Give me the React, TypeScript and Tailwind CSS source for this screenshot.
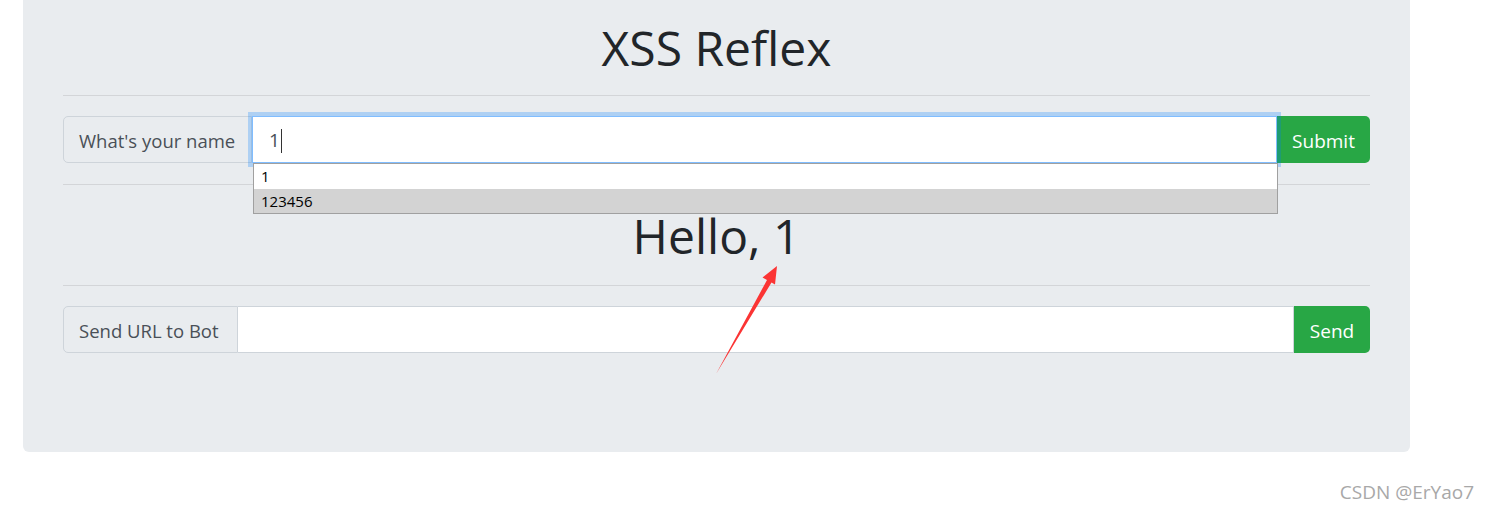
const font = { fontFamily: '"Open Sans", "Liberation Sans", sans-serif' }

function Arrow() {
  return (
    <svg
      className="pointer-events-none absolute left-0 top-0"
      width="1491"
      height="509"
      viewBox="0 0 1491 509"
    >
      <polygon
        points="716,374 771.5,282.5 775,284.5 777,266 762.5,277.5 767,280"
        fill="#fb3434"
      />
    </svg>
  )
}

export default function App() {
  return (
    <div className="relative h-[509px] w-[1491px] overflow-hidden bg-white" style={font}>
      <div className="ml-[23px] w-[1387px] rounded-b-[6px] bg-[#e9ecef] px-[40px] pb-[99px] pt-[18px]">
        <h1 className="h-[60px] text-center text-[48px] font-normal leading-[60px] text-[#212529]">
          XSS Reflex
        </h1>
        <hr className="mt-[17px] mb-[20px] border-0 border-t border-[#d3d5d8]" />

        {/* name input with browser autocomplete list */}
        <div className="flex h-[47px]">
          <div className="flex w-[189px] shrink-0 items-center whitespace-nowrap rounded-l-[5px] border border-[#ced4da] bg-[#e9ecef] px-[15px] pt-[3px] text-[18.5px] text-[#495057]">
            What&apos;s your name
          </div>
          <div className="relative z-10 flex flex-1 items-center border border-[#80bdff] bg-white px-[16px] pt-[2px] text-[19px] text-[#495057] shadow-[0_0_0_4px_rgba(0,123,255,0.25)]">
            <span>1</span>
            <span className="ml-[1px] h-[24px] w-px bg-[#333]" />
            <div className="absolute left-0 top-[46px] w-[1025px] border border-[#a0a0a0] bg-white text-[15px] text-black">
              <div className="flex h-[25px] items-center px-[7px]">1</div>
              <div className="flex h-[24px] items-center bg-[#d3d3d3] px-[7px]">123456</div>
            </div>
          </div>
          <button className="w-[93px] shrink-0 rounded-r-[5px] bg-[#28a745] pt-[3px] text-[19px] text-white">
            Submit
          </button>
        </div>

        <hr className="mt-[21px] mb-[21px] border-0 border-t border-[#d3d5d8]" />
        <h1 className="h-[60px] text-center text-[48px] font-normal leading-[60px] text-[#212529]">
          Hello, 1
        </h1>
        <hr className="mt-[19px] mb-[20px] border-0 border-t border-[#d3d5d8]" />

        <div className="flex h-[47px]">
          <div className="flex w-[175px] shrink-0 items-center whitespace-nowrap rounded-l-[5px] border border-[#ced4da] bg-[#e9ecef] px-[15px] pt-[3px] text-[18.5px] text-[#495057]">
            Send URL to Bot
          </div>
          <div className="flex-1 border border-l-0 border-[#ced4da] bg-white" />
          <button className="w-[76px] shrink-0 rounded-r-[5px] bg-[#28a745] pt-[3px] text-[19px] text-white">
            Send
          </button>
        </div>
      </div>

      <div className="mt-[25px] pr-[17px] text-right text-[19px] leading-[30px] text-[#a8a8a8]">
        CSDN @ErYao7
      </div>

      <Arrow />
    </div>
  )
}
